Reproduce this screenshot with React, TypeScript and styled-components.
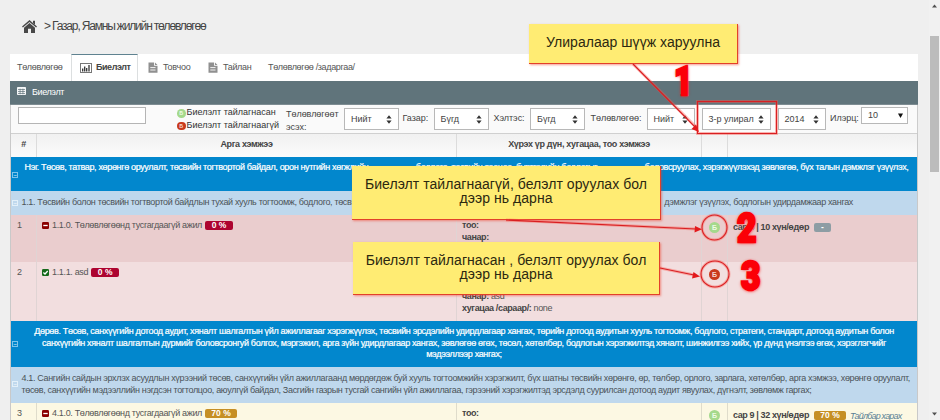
import React from 'react';
import styled, { createGlobalStyle, css } from 'styled-components';

const Global = createGlobalStyle`
  *, *::before, *::after { box-sizing: border-box; }
  body {
    margin: 0;
    background: #efefef;
    font: 9px/11.65px "Liberation Sans", Arial, sans-serif;
    color: #444;
    overflow: hidden;
  }
`;

const Page = styled.div`
  position: relative;
  width: 940px;
  height: 420px;
  overflow: hidden;
  display: flex;
  justify-content: space-between;
`;

const Main = styled.main`
  width: 908px;
  margin-left: 10px;
`;

const Breadcrumb = styled.header`
  height: 54px;
  padding: 0 0 1px 12px;
  display: flex;
  align-items: center;
  color: #444;
  font-size: 12px;
  svg { margin-right: 7px; }
`;

const Crumb = styled.span`
  margin-left: 1px;
  letter-spacing: -1.17px;
  white-space: pre;
`;

const Tabs = styled.nav`
  height: 27px;
  display: flex;
  background: #fff;
  letter-spacing: -0.33px;
  color: #555;
`;

const Tab = styled.div<{ $w: number; $pad: number; $gap?: number; $active?: boolean; $ls?: number }>`
  width: ${p => p.$w}px;
  padding-left: ${p => p.$pad}px;
  display: flex;
  align-items: center;
  gap: ${p => p.$gap ?? 5}px;
  white-space: nowrap;
  letter-spacing: ${p => p.$ls ?? -0.34}px;
  ${p =>
    p.$active &&
    css`
      border: 1px solid #dcdfe0;
      border-top: 1px solid #5f8290;
      border-bottom: 0;
      font-weight: bold;
      color: #444;
    `}
`;

const PanelTitle = styled.div`
  height: 24px;
  padding: 1px 0 0 7px;
  display: flex;
  align-items: center;
  gap: 6px;
  background: #60747b;
  border-bottom: 1px solid #7d8c92;
  color: #fff;
  letter-spacing: -0.38px;
  svg { margin-top: -4px; }
`;

const Filters = styled.form`
  height: 28px;
  display: flex;
  background: #fafafa;
  border-left: 1px solid #ccc;
  border-right: 1px solid #ccc;
  color: #444;
`;

const SearchBox = styled.div`
  width: 128px;
  height: 17px;
  margin: 2px 31px 0 7px;
  background: #fff;
  border: 1px solid #b5b5b5;
`;

const Legend = styled.div`
  width: 109px;
  padding-top: 2px;
`;

const LegendRow = styled.div`
  height: 12.5px;
  display: flex;
  align-items: center;
  gap: 1px;
  color: #333;
  white-space: nowrap;
`;

const Dot = styled.i<{ $red?: boolean; $size: number }>`
  flex: none;
  width: ${p => p.$size}px;
  height: ${p => p.$size}px;
  border-radius: 50%;
  display: flex;
  align-items: center;
  justify-content: center;
  background: ${p => (p.$red ? '#c93a1c' : '#a5d98c')};
  color: ${p => (p.$red ? '#f5d8d0' : '#eefbe6')};
  font: bold ${p => p.$size * 0.64}px "Liberation Sans", Arial, sans-serif;
  letter-spacing: 0;
`;

const FilterLabel = styled.label<{ $w: number; $two?: boolean }>`
  width: ${p => p.$w}px;
  padding-top: ${p => (p.$two ? 3 : 7)}px;
  line-height: 12.5px;
  letter-spacing: -0.04px;
`;

const Select = styled.div<{ $w: number; $gap: number; $padR?: number }>`
  width: ${p => p.$w}px;
  height: 22px;
  margin: 3px ${p => p.$gap}px 0 1px;
  padding: 1px ${p => p.$padR ?? 6}px 0 6px;
  display: flex;
  align-items: center;
  justify-content: space-between;
  background: #fff;
  border: 1px solid #b8b8b8;
  white-space: nowrap;
`;

const PageSize = styled(Select)`
  height: 17px;
  margin-top: 2px;
  margin-left: 0;
  padding-bottom: 1px;
`;

const Grid = styled.section`
  border-left: 1px solid #c9c9c9;
  border-right: 1px solid #c9c9c9;
  letter-spacing: -0.34px;
`;

const Row = styled.div<{ $h: number; $tone: string; $line?: string }>`
  height: ${p => p.$h}px;
  display: grid;
  grid-template-columns: 25px 420px 245px 26px 190px;
  background: ${p => p.$tone};
  > * + * { border-left: 1px solid ${p => p.$line ?? '#e0d4d4'}; }
`;

const HeadRow = styled(Row)`
  background: linear-gradient(#f1f1f1, #fbfbfb);
  border-top: 1px solid #d0d0d0;
  text-align: center;
  font-weight: bold;
  line-height: 21px;
  color: #444;
`;

const NumCell = styled.div`
  padding: 5px 0 0 6px;
  color: #555;
`;

const NameCell = styled.div`
  padding: 5px 0 0 5px;
  display: flex;
  align-items: flex-start;
  gap: 3px;
  color: #555;
  svg { margin-top: 2px; }
`;

const Badge = styled.span<{ $bg: string; $w: number }>`
  width: ${p => p.$w}px;
  height: 9px;
  border-radius: 2px;
  background: ${p => p.$bg};
  color: #fff;
  text-align: center;
  font: bold 8.5px/9.5px "Liberation Sans", Arial, sans-serif;
  letter-spacing: 0;
  margin-top: 1px;
`;

const DetailCell = styled.div<{ $top?: number }>`
  padding: ${p => p.$top ?? 5}px 0 0 5px;
  color: #555;
  b { letter-spacing: -0.4px; color: #444; }
`;

const StateCell = styled.div<{ $top: number }>`
  padding: ${p => p.$top}px 0 0 7px;
`;

const EffortCell = styled.div`
  padding: 7px 0 0 5px;
  display: flex;
  align-items: flex-start;
  gap: 5px;
  white-space: nowrap;
  b { letter-spacing: -0.385px; color: #444; }
  i { margin: 1px 0 0 -1px; color: #5a7f93; letter-spacing: -0.8px; }
`;

const Band = styled.div<{ $h: number; $deep?: boolean; $pad: number; $mark: number }>`
  position: relative;
  height: ${p => p.$h}px;
  padding-top: ${p => p.$pad}px;
  white-space: nowrap;
  ${p =>
    p.$deep
      ? css`
          background: #0287cd;
          color: #fff;
          text-align: center;
          -webkit-text-stroke: 0.22px #fff;
        `
      : css`
          background: #bfd8ed;
          color: #4c5358;
          padding-left: 10.5px;
        `}
  &::before {
    content: '−';
    position: absolute;
    left: 1px;
    top: ${p => p.$mark}px;
    width: 6px;
    height: 6px;
    border: 1px solid ${p => (p.$deep ? '#7cc4ea' : '#e3f0f9')};
    color: #fff;
    font-size: 6px;
    line-height: 4px;
    text-align: center;
    -webkit-text-stroke: 0;
  }
`;

const Line = styled.div<{ $ls?: number }>`
  letter-spacing: ${p => p.$ls ?? -0.34}px;
`;

const SpreadLine = styled(Line)<{ $left: number; $right: number }>`
  display: flex;
  justify-content: space-between;
  padding: 0 ${p => p.$right}px 0 ${p => p.$left}px;
`;

const ScrollBar = styled.aside`
  width: 11px;
  height: 420px;
  padding: 4px 0 4px;
  display: flex;
  flex-direction: column;
  align-items: center;
  background: #f1f1f1;
`;

const Thumb = styled.div`
  width: 9px;
  height: 136px;
  margin: 28px 0 auto;
  background: #bcbcbc;
`;

const Note = styled.div<{ $x: number; $y: number; $w: number; $h: number; $pad: number; $ls?: number }>`
  position: absolute;
  left: ${p => p.$x}px;
  top: ${p => p.$y}px;
  width: ${p => p.$w}px;
  height: ${p => p.$h}px;
  padding-top: ${p => p.$pad}px;
  background: #ffec73;
  border-right: 1px solid #e2412a;
  border-bottom: 1px solid #e2412a;
  box-shadow: 1px 1px 2px rgba(240, 60, 40, 0.5);
  color: #2c2810;
  font-size: 14px;
  line-height: 14px;
  letter-spacing: ${p => p.$ls ?? 0.04}px;
  text-align: center;
  white-space: nowrap;
`;

const Marks = styled.svg`
  position: absolute;
  left: 0;
  top: 0;
`;

const Digit = styled.span<{ $x: number; $y: number; $sx: number }>`
  position: absolute;
  left: ${p => p.$x}px;
  top: ${p => p.$y}px;
  color: #fb0007;
  font: 900 41px/42px Roboto, "Liberation Sans", sans-serif;
  transform: scaleX(${p => p.$sx});
  transform-origin: 0 0;
  -webkit-text-stroke: 2.6px #fb0007;
  text-shadow: -1px -1px 0 #fff, 1px 1px 0 #fff, 0 1px 0 #fff, 0 0 3px #ff2020, 0 1px 4px #ff2020;
`;

const Sorter = () => (
  <svg width="6" height="9" viewBox="0 0 6 9" fill="#333">
    <path d="M3 .3 5.6 3.6H.4zM3 8.7 .4 5.4h5.2z" />
  </svg>
);

const DocIcon = () => (
  <svg width="10" height="11" viewBox="0 0 10 11">
    <path d="M.5.5h5.6v3.2h3.4v7h-9z" fill="#909090" />
    <path d="M7 .4 9.5 3H7z" fill="#909090" />
    <path d="M2.3 5.6h5.2M2.3 8h5.2" stroke="#fff" strokeWidth=".9" />
  </svg>
);

const ChartIcon = () => (
  <svg width="12" height="10" viewBox="0 0 12 10">
    <rect x=".5" y=".5" width="11" height="9" fill="#fff" stroke="#777" />
    <path d="M2.7 8.5V5.5M4.7 8.5V3.5M6.7 8.5V5M9 8.5V2" stroke="#333" strokeWidth="1.3" />
  </svg>
);

const HomeIcon = () => (
  <svg width="15" height="13" viewBox="0 0 15 13" fill="#484848">
    <path d="M7.5 0 15 6.6l-.9 1L7.5 1.9.9 7.6 0 6.6z" />
    <path d="M11 .8h2v4l-2-1.8zM7.5 3 13 7.7V13H9V8.7H6V13H2V7.7z" />
  </svg>
);

const TableIcon = () => (
  <svg width="9" height="8" viewBox="0 0 9 8">
    <rect width="9" height="8" rx=".8" fill="#f4f6f7" />
    <path d="M1 2.5h7M1 4.5h7M1 6.5h7M3.1 1.7v5.6M5.9 1.7v5.6" stroke="#60747b" strokeWidth=".7" />
  </svg>
);

const StatusIcon = ({ done }: { done?: boolean }) => (
  <svg width="7" height="7" viewBox="0 0 7 7">
    <rect width="7" height="7" rx="1.2" fill={done ? '#16691b' : '#8b0000'} />
    <path d={done ? 'M1.4 3.5 3 5l2.7-3' : 'M1.3 3.5h4.4'} stroke="#fff" strokeWidth="1.3" fill="none" />
  </svg>
);

const Arrow = ({ up }: { up?: boolean }) => (
  <svg width="5" height="4" viewBox="0 0 5 4" fill="#505050">
    <path d={up ? 'M2.5 .5 5 3.5H0z' : 'M2.5 3.5 0 .5h5z'} />
  </svg>
);

export default function App() {
  return (
    <Page>
      <Global />
      <Main>
        <Breadcrumb>
          <HomeIcon />
          &gt;<Crumb>Газар, Яамны жилийн төлөвлөгөө</Crumb>
        </Breadcrumb>
        <Tabs>
          <Tab $w={61} $pad={7}>Төлөвлөгөө</Tab>
          <Tab $w={67} $pad={8} $gap={4} $active $ls={-0.44}><ChartIcon />Биелэлт</Tab>
          <Tab $w={60} $pad={10} $ls={-0.23}><DocIcon />Товчоо</Tab>
          <Tab $w={60} $pad={10}><DocIcon />Тайлан</Tab>
          <Tab $w={120} $pad={10}>Төлөвлөгөө /задаргаа/</Tab>
        </Tabs>
        <PanelTitle><TableIcon />Биелэлт</PanelTitle>
        <Filters>
          <SearchBox />
          <Legend>
            <LegendRow><Dot $size={8.5}>Б</Dot>Биелэлт тайлагнасан</LegendRow>
            <LegendRow><Dot $size={8.5} $red>Б</Dot>Биелэлт тайлагнаагүй</LegendRow>
          </Legend>
          <FilterLabel $w={57} $two>Төлөвлөгөөт эсэх:</FilterLabel>
          <Select $w={55} $gap={3.5}>Нийт<Sorter /></Select>
          <FilterLabel $w={30}>Газар:</FilterLabel>
          <Select $w={55} $gap={5}>Бүгд<Sorter /></Select>
          <FilterLabel $w={35.5}>Хэлтэс:</FilterLabel>
          <Select $w={55} $gap={5.5}>Бүгд<Sorter /></Select>
          <FilterLabel $w={55}>Төлөвлөгөө:</FilterLabel>
          <Select $w={48} $gap={6}>Нийт<Sorter /></Select>
          <Select $w={69} $gap={6}>3-р улирал<Sorter /></Select>
          <Select $w={48} $gap={4.5}>2014<Sorter /></Select>
          <FilterLabel $w={31}>Илэрц:</FilterLabel>
          <PageSize $w={47} $gap={0} $padR={4}>
            10
            <svg width="5" height="5" viewBox="0 0 5 5"><path d="M0 .5h5L2.5 5z" fill="#111" /></svg>
          </PageSize>
        </Filters>
        <Grid>
          <HeadRow $h={24} $tone="#f6f6f6" $line="#dcdcdc">
            <div>#</div>
            <div>Арга хэмжээ</div>
            <div>Хүрэх үр дүн, хугацаа, тоо хэмжээ</div>
            <div />
            <div />
          </HeadRow>
          <Band $h={34} $deep $pad={5} $mark={15}>
            <SpreadLine $left={13.5} $right={8.5}>
              <span>Нэг. Төсөв, татвар, хөрөнгө оруулалт, төсвийн тогтвортой байдал, орон нутгийн хөгжлийн</span>
              <span>бодлого, төсвийн тооцоо, бүртгэлийн бодлогыг</span>
              <span>боловсруулах, хэрэгжүүлэхэд зөвлөгөө, бүх талын дэмжлэг үзүүлэх,</span>
            </SpreadLine>
          </Band>
          <Band $h={24} $pad={6} $mark={9}>
            <SpreadLine $left={0} $right={64}>
              <span>1.1. Төсвийн болон төсвийн тогтвортой байдлын тухай хууль тогтоомж, бодлого, төсвийн</span>
              <span>дэмжлэг үзүүлэх, бодлогын удирдамжаар хангах</span>
            </SpreadLine>
          </Band>
          <Row $h={47} $tone="#eacdce">
            <NumCell>1</NumCell>
            <NameCell><StatusIcon />1.1.0. Төлөвлөгөөнд тусгагдаагүй ажил <Badge $bg="#ad0430" $w={28}>0 %</Badge></NameCell>
            <DetailCell><b>тоо:</b><br /><b>чанар:</b></DetailCell>
            <StateCell $top={7}><Dot $size={11}>Б</Dot></StateCell>
            <EffortCell><b>сар 9 | 10 хүн/өдөр</b><Badge $bg="#8d9da4" $w={17}>-</Badge></EffortCell>
          </Row>
          <Row $h={59} $tone="#f2dedf">
            <NumCell>2</NumCell>
            <NameCell><StatusIcon done />1.1.1. asd <Badge $bg="#ad0430" $w={28}>0 %</Badge></NameCell>
            <DetailCell $top={29}><b>чанар:</b> asd<br /><b>хугацаа /сараар/:</b> none</DetailCell>
            <StateCell $top={7}><Dot $size={11} $red>Б</Dot></StateCell>
            <div />
          </Row>
          <Band $h={46} $deep $pad={5} $mark={20}>
            <Line $ls={-0.328}>Дөрөв. Төсөв, санхүүгийн дотоод аудит, хяналт шалгалтын үйл ажиллагааг хэрэгжүүлэх, төсвийн эрсдэлийн удирдлагаар хангах, төрийн дотоод аудитын хууль тогтоомж, бодлого, стратеги, стандарт, дотоод аудитын болон</Line>
            <Line $ls={-0.34}>санхүүгийн хяналт шалгалтын дүрмийг боловсронгуй болгох, мэргэжил, арга зүйн удирдлагаар хангах, зөвлөгөө өгөх, төсөл, хөтөлбөр, бодлогын хэрэгжилтэд хяналт, шинжилгээ хийх, үр дүнд үнэлгээ өгөх, хэрэглэгчийг</Line>
            <Line>мэдээллээр хангах;</Line>
          </Band>
          <Band $h={36} $pad={6} $mark={14}>
            <Line $ls={-0.343}>4.1. Сангийн сайдын эрхлэх асуудлын хүрээний төсөв, санхүүгийн үйл ажиллагаанд мөрдөгдөж буй хууль тогтоомжийн хэрэгжилт, бүх шатны төсвийн хөрөнгө, өр, төлбөр, орлого, зарлага, хөтөлбөр, арга хэмжээ, хөрөнгө оруулалт,</Line>
            <Line $ls={-0.339}>төсөв, санхүүгийн мэдээллийн нэгдсэн тогтолцоо, аюулгүй байдал, Засгийн газрын тусгай сангийн үйл ажиллагаа, гэрээний хэрэгжилтэд эрсдэлд суурилсан дотоод аудит явуулах, дүгнэлт, зөвлөмж гаргах;</Line>
          </Band>
          <Row $h={47} $tone="#fcf8e3" $line="#dfdccb">
            <NumCell>3</NumCell>
            <NameCell><StatusIcon />4.1.0. Төлөвлөгөөнд тусгагдаагүй ажил <Badge $bg="#c68f24" $w={32}>70 %</Badge></NameCell>
            <DetailCell><b>тоо:</b></DetailCell>
            <StateCell $top={7}><Dot $size={11}>Б</Dot></StateCell>
            <EffortCell><b>сар 9 | 32 хүн/өдөр</b><Badge $bg="#c68f24" $w={32}>70 %</Badge><i>Тайлбар харах</i></EffortCell>
          </Row>
        </Grid>
      </Main>
      <ScrollBar><Arrow up /><Thumb /><Arrow /></ScrollBar>

      <Digit $x={674} $y={60} $sx={0.78}>1</Digit>
      <Digit $x={737} $y={207} $sx={0.82}>2</Digit>
      <Digit $x={741} $y={255} $sx={0.82}>3</Digit>
      <Note $x={529} $y={24} $w={209} $h={40} $pad={11}>Улиралаар шүүж харуулна</Note>
      <Note $x={352} $y={166} $w={309} $h={54} $pad={11} $ls={0.05}>Биелэлт тайлагнаагүй, белэлт оруулах бол<br />дээр нь дарна</Note>
      <Note $x={353} $y={242} $w={307} $h={53} $pad={11} $ls={0.05}>Биелэлт тайлагнасан , белэлт оруулах бол<br />дээр нь дарна</Note>
      <Marks width="940" height="420" viewBox="0 0 940 420" fill="none">
        <g stroke="#ff5a50" strokeOpacity=".4" strokeWidth="3">
          <path d="M633 64 697 128M506 220 696 229M660 268 694 275" />
          <rect x="697.5" y="101.5" width="79" height="32" />
          <circle cx="714.5" cy="227.5" r="12.5" />
          <ellipse cx="715" cy="274" rx="14" ry="13" />
        </g>
        <g stroke="#d81f22" strokeWidth="1.1">
          <path d="M633 64 696 128M506 220 696 229M660 268 694 275" />
          <rect x="697.5" y="101.5" width="79" height="32" />
          <circle cx="714.5" cy="227.5" r="12.5" />
          <ellipse cx="715" cy="274" rx="14" ry="13" />
        </g>
        <g fill="#e3191c">
          <path d="M699 132 691.5 129 696 124.5z" />
          <path d="M702 229.3 694.5 232.5 695 226z" />
          <path d="M700 276.5 692 278.5 693.500 272z" />
        </g>
      </Marks>
    </Page>
  );
}
